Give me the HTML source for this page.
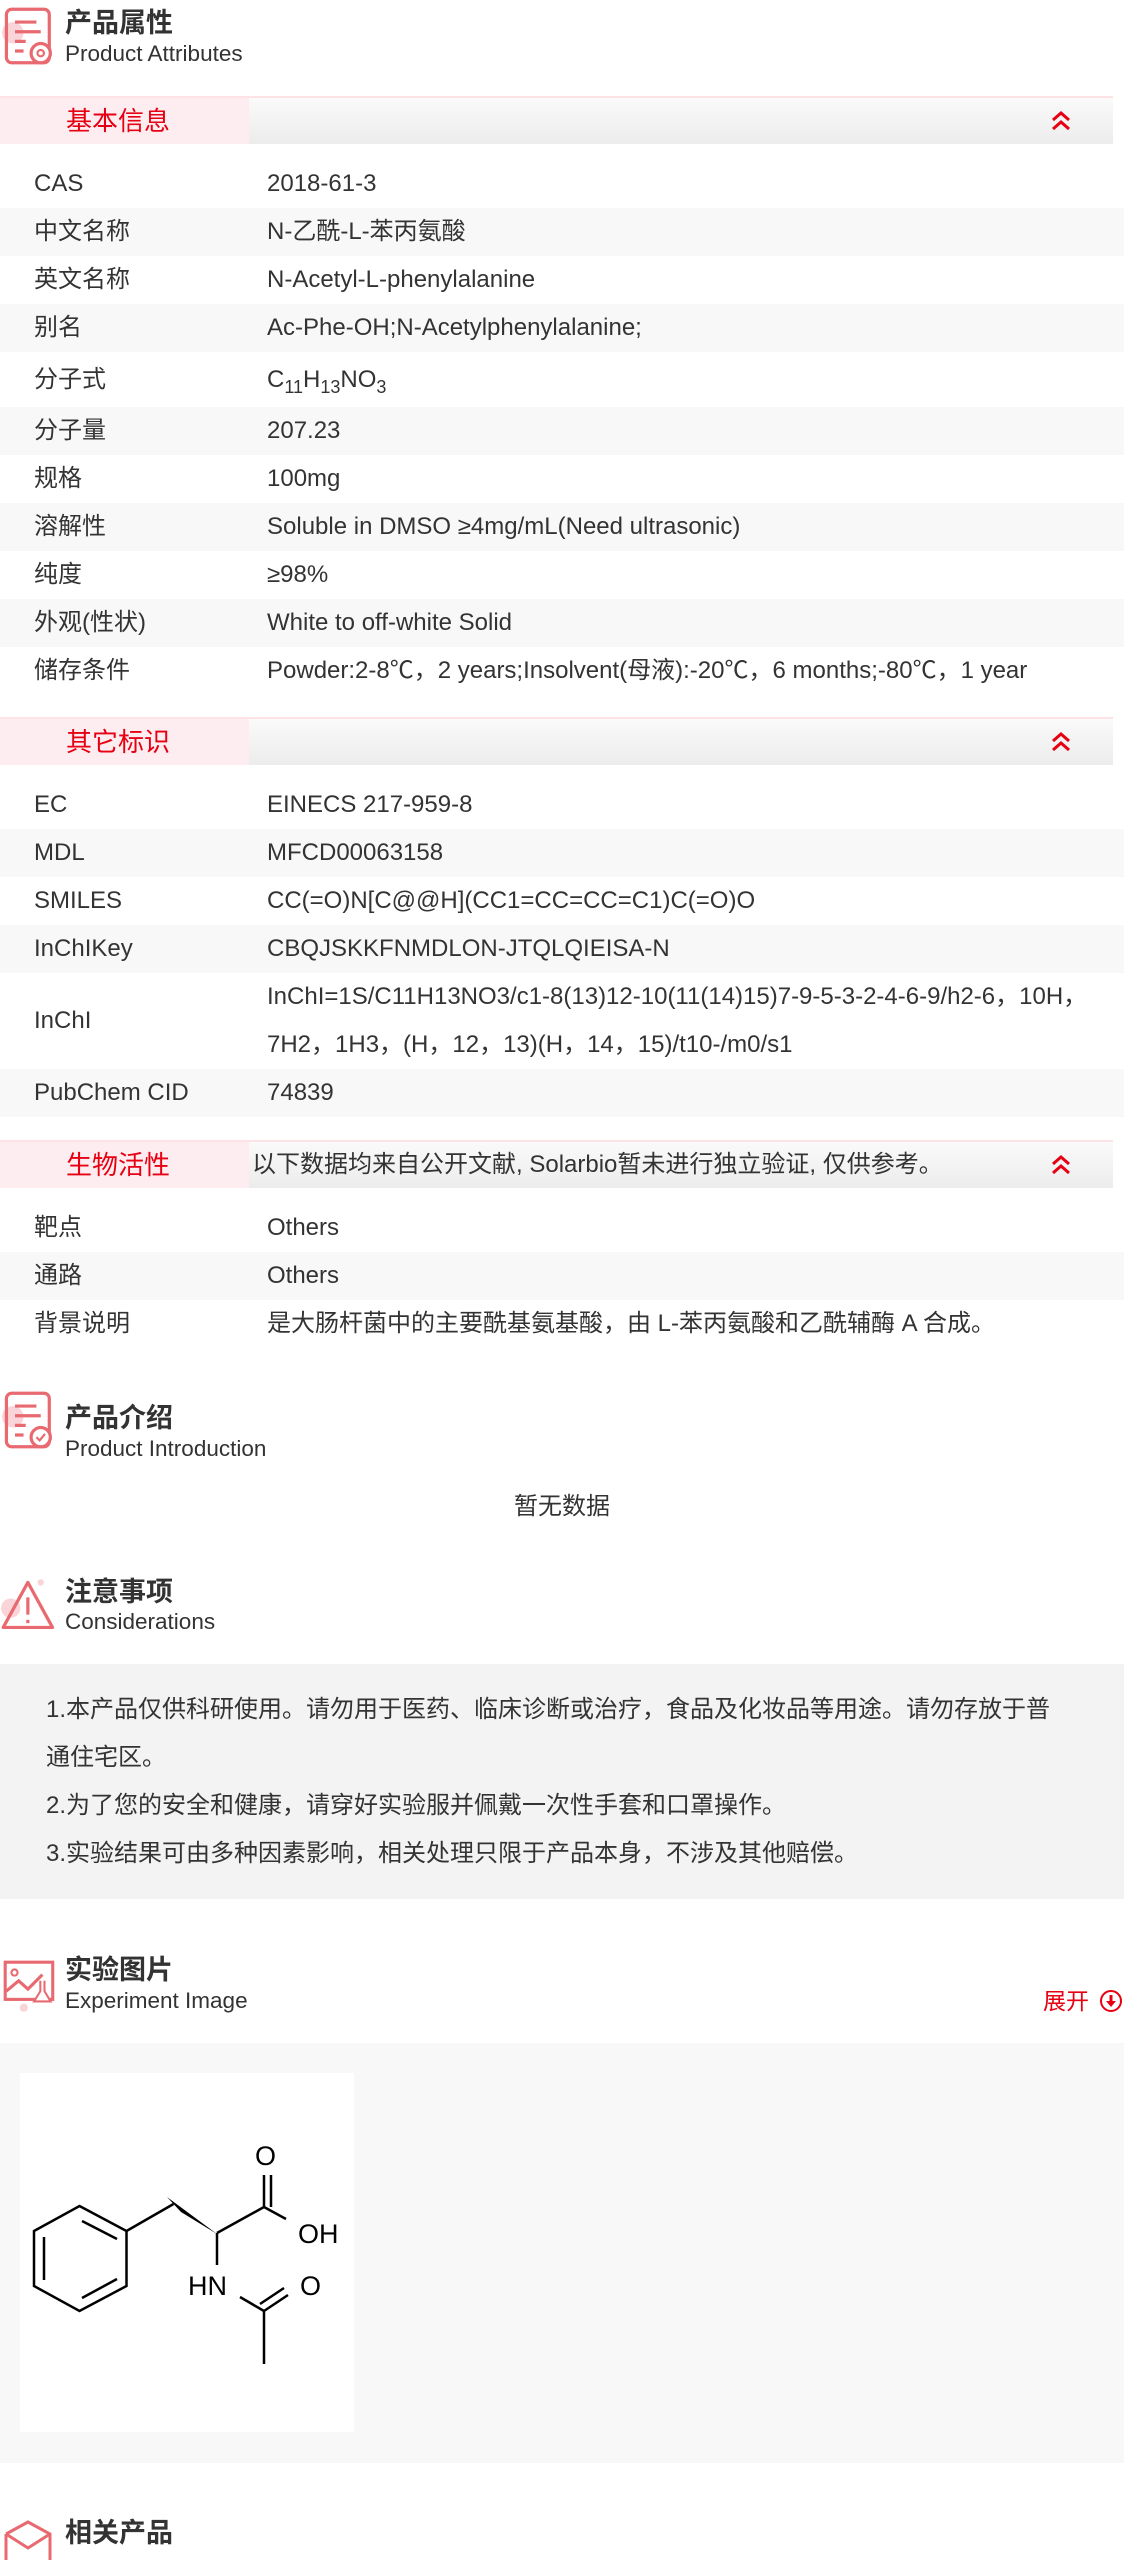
<!DOCTYPE html>
<html><head><meta charset="utf-8">
<style>
*{margin:0;padding:0;box-sizing:border-box}
body{width:1124px;height:2555px;background:#fff;position:relative;overflow:hidden;font-family:"Liberation Sans","Noto Sans CJK SC",sans-serif;color:#333}
.a{position:absolute}
.t1{position:absolute;left:65px;font-size:27px;font-weight:bold;color:#333;line-height:30px}
.t2{position:absolute;left:65px;font-size:22.5px;color:#333;line-height:26px}
.band{position:absolute;left:0;width:1113px;height:48px;border-top:2px solid #fde3e6;background:linear-gradient(#fafafa,#ececec)}
.band .p{position:absolute;left:0;top:0;width:249px;height:46px;background:#fdedf0}
.band .bt{position:absolute;left:66px;top:0;line-height:46px;font-size:26px;color:#e60012}
.band svg{position:absolute;left:1051px;top:13px}
.row{position:absolute;left:0;width:1124px;height:48px;font-size:24px;line-height:48px}
.row.g{background:#f8f8f8}
.row .l{position:absolute;left:34px}
.row .v{position:absolute;left:267px;white-space:nowrap}
</style></head><body>

<svg class="a" style="left:0;top:6px" width="60" height="60" viewBox="0 0 56 56">
<circle cx="12" cy="25" r="10" fill="#f9d4d8"/>
<rect x="6" y="3" width="40" height="50" rx="5" fill="none" stroke="#e86a70" stroke-width="3"/>
<path d="M14 15h20M14 24h24M14 33h10M14 42h8" stroke="#e86a70" stroke-width="3"/>
<circle cx="38" cy="44" r="9" fill="#fff" stroke="#e86a70" stroke-width="3"/>
<circle cx="38" cy="44" r="3" fill="none" stroke="#e86a70" stroke-width="2"/>
</svg>
<div class="t1" style="top:8px">产品属性</div>
<div class="t2" style="top:41px">Product Attributes</div>

<div class="band" style="top:96px"><div class="p"></div><div class="bt">基本信息</div>
<svg width="20" height="20" viewBox="0 0 20 20"><path d="M2 9l8-7 8 7M2 18l8-7 8 7" fill="none" stroke="#e60012" stroke-width="3"/></svg></div>

<div class="row" style="top:160px"><span class="l">CAS</span><span class="v">2018-61-3</span></div>
<div class="row g" style="top:208px"><span class="l">中文名称</span><span class="v">N-乙酰-L-苯丙氨酸</span></div>
<div class="row" style="top:256px"><span class="l">英文名称</span><span class="v">N-Acetyl-L-phenylalanine</span></div>
<div class="row g" style="top:304px"><span class="l">别名</span><span class="v">Ac-Phe-OH;N-Acetylphenylalanine;</span></div>
<div class="row" style="top:352px;height:55px;line-height:55px"><span class="l">分子式</span><span class="v">C<sub style="font-size:18px">11</sub>H<sub style="font-size:18px">13</sub>NO<sub style="font-size:18px">3</sub></span></div>
<div class="row g" style="top:407px"><span class="l">分子量</span><span class="v">207.23</span></div>
<div class="row" style="top:455px"><span class="l">规格</span><span class="v">100mg</span></div>
<div class="row g" style="top:503px"><span class="l">溶解性</span><span class="v">Soluble in DMSO ≥4mg/mL(Need ultrasonic)</span></div>
<div class="row" style="top:551px"><span class="l">纯度</span><span class="v">≥98%</span></div>
<div class="row g" style="top:599px"><span class="l">外观(性状)</span><span class="v">White to off-white Solid</span></div>
<div class="row" style="top:647px"><span class="l">储存条件</span><span class="v">Powder:2-8℃，2 years;Insolvent(母液):-20℃，6 months;-80℃，1 year</span></div>

<div class="band" style="top:717px"><div class="p"></div><div class="bt">其它标识</div>
<svg width="20" height="20" viewBox="0 0 20 20"><path d="M2 9l8-7 8 7M2 18l8-7 8 7" fill="none" stroke="#e60012" stroke-width="3"/></svg></div>

<div class="row" style="top:781px"><span class="l">EC</span><span class="v">EINECS 217-959-8</span></div>
<div class="row g" style="top:829px"><span class="l">MDL</span><span class="v">MFCD00063158</span></div>
<div class="row" style="top:877px"><span class="l">SMILES</span><span class="v">CC(=O)N[C@@H](CC1=CC=CC=C1)C(=O)O</span></div>
<div class="row g" style="top:925px"><span class="l">InChIKey</span><span class="v">CBQJSKKFNMDLON-JTQLQIEISA-N</span></div>
<div class="row" style="top:973px;height:96px;line-height:96px"><span class="l">InChI</span><span class="v" style="line-height:48px;top:0">InChI=1S/C11H13NO3/c1-8(13)12-10(11(14)15)7-9-5-3-2-4-6-9/h2-6，10H，<br>7H2，1H3，(H，12，13)(H，14，15)/t10-/m0/s1</span></div>
<div class="row g" style="top:1069px"><span class="l">PubChem CID</span><span class="v">74839</span></div>

<div class="band" style="top:1140px"><div class="p"></div><div class="bt">生物活性</div>
<div class="a" style="left:252px;top:0;line-height:46px;font-size:24px;color:#333">以下数据均来自公开文献, Solarbio暂未进行独立验证, 仅供参考。</div>
<svg width="20" height="20" viewBox="0 0 20 20"><path d="M2 9l8-7 8 7M2 18l8-7 8 7" fill="none" stroke="#e60012" stroke-width="3"/></svg></div>

<div class="row" style="top:1204px"><span class="l">靶点</span><span class="v">Others</span></div>
<div class="row g" style="top:1252px"><span class="l">通路</span><span class="v">Others</span></div>
<div class="row" style="top:1300px"><span class="l">背景说明</span><span class="v">是大肠杆菌中的主要酰基氨基酸，由 L-苯丙氨酸和乙酰辅酶 A 合成。</span></div>

<svg class="a" style="left:0;top:1390px" width="60" height="60" viewBox="0 0 56 56">
<circle cx="12" cy="25" r="10" fill="#f9d4d8"/>
<rect x="6" y="3" width="40" height="50" rx="5" fill="none" stroke="#e86a70" stroke-width="3"/>
<path d="M14 15h20M14 24h24M14 33h10M14 42h8" stroke="#e86a70" stroke-width="3"/>
<circle cx="38" cy="44" r="9" fill="#fff" stroke="#e86a70" stroke-width="3"/>
<path d="M34 44l3 3 5-6" fill="none" stroke="#e86a70" stroke-width="2"/>
</svg>
<div class="t1" style="top:1403px">产品介绍</div>
<div class="t2" style="top:1436px">Product Introduction</div>
<div class="a" style="left:0;width:1124px;text-align:center;top:1492px;font-size:24px;line-height:30px">暂无数据</div>

<svg class="a" style="left:0;top:1576px" width="60" height="60" viewBox="0 0 56 56">
<circle cx="10" cy="30" r="9" fill="#f9d4d8"/>
<circle cx="38" cy="6" r="3" fill="#f9d4d8"/>
<path d="M26 6L3 48h46z" fill="none" stroke="#e86a70" stroke-width="3" stroke-linejoin="round"/>
<path d="M26 20v16M26 41v3" stroke="#e86a70" stroke-width="3"/>
</svg>
<div class="t1" style="top:1577px">注意事项</div>
<div class="t2" style="top:1609px">Considerations</div>
<div class="a" style="left:0;top:1664px;width:1124px;height:235px;background:#f3f3f3"></div>
<div class="a" style="left:46px;top:1686px;font-size:24px;line-height:48px;width:1060px">1.本产品仅供科研使用。请勿用于医药、临床诊断或治疗，食品及化妆品等用途。请勿存放于普<br>通住宅区。<br>2.为了您的安全和健康，请穿好实验服并佩戴一次性手套和口罩操作。<br>3.实验结果可由多种因素影响，相关处理只限于产品本身，不涉及其他赔偿。</div>

<svg class="a" style="left:0;top:1956px" width="60" height="62" viewBox="0 0 56 60">
<circle cx="22" cy="50" r="4" fill="#f9d4d8"/>
<rect x="4" y="6" width="46" height="36" fill="none" stroke="#e86a70" stroke-width="3"/>
<circle cx="13" cy="16" r="3" fill="none" stroke="#e86a70" stroke-width="2"/>
<path d="M5 34l12-10 9 8 14-14" fill="none" stroke="#e86a70" stroke-width="3"/>
<path d="M38 24v10l-6 10h16l-6-10V24" fill="#fff" stroke="#e86a70" stroke-width="2"/>
</svg>
<div class="t1" style="top:1955px">实验图片</div>
<div class="t2" style="top:1988px">Experiment Image</div>
<div class="a" style="left:1043px;top:1986px;font-size:23px;line-height:30px;color:#e60012">展开</div>
<svg class="a" style="left:1099px;top:1989px" width="24" height="24" viewBox="0 0 24 24"><circle cx="12" cy="12" r="10" fill="none" stroke="#e60012" stroke-width="2"/><path d="M12 6v8" stroke="#e60012" stroke-width="3"/><path d="M7 12l5 6 5-6z" fill="#e60012"/></svg>

<div class="a" style="left:0;top:2043px;width:1124px;height:420px;background:#f8f8f8"></div>
<svg class="a" style="left:20px;top:2073px;background:#fff" width="334" height="359" viewBox="0 0 334 359">
<g fill="none" stroke="#000" stroke-width="2.5">
<path d="M59.5 133L106.5 158V213L59.5 238L14 213V158Z"/>
<path d="M62 148L97 166M97 206L62 225M24 164V207"/>
<path d="M106.5 158L153.5 131"/>
<path d="M197 160L244 134V102M251 134V102M244 134L266 146"/>
<path d="M197 160V192"/>
<path d="M220 224L244 238V291M244 238L268 222M240 231L264 215"/>
</g>
<path d="M147 124L161 139L197 161Z" fill="#000"/>
<g font-family="Liberation Sans, sans-serif" font-size="27" fill="#000">
<text x="235" y="92">O</text>
<text x="278" y="170">OH</text>
<text x="168" y="222">HN</text>
<text x="280" y="222">O</text>
</g>
</svg>

<svg class="a" style="left:0;top:2520px" width="56" height="40" viewBox="0 0 56 40"><path d="M6 14L28 2l22 12v26" fill="none" stroke="#e86a70" stroke-width="3"/><path d="M6 14v26M6 14l22 14 22-14" fill="none" stroke="#e86a70" stroke-width="3"/></svg>
<div class="t1" style="top:2518px">相关产品</div>

</body></html>
